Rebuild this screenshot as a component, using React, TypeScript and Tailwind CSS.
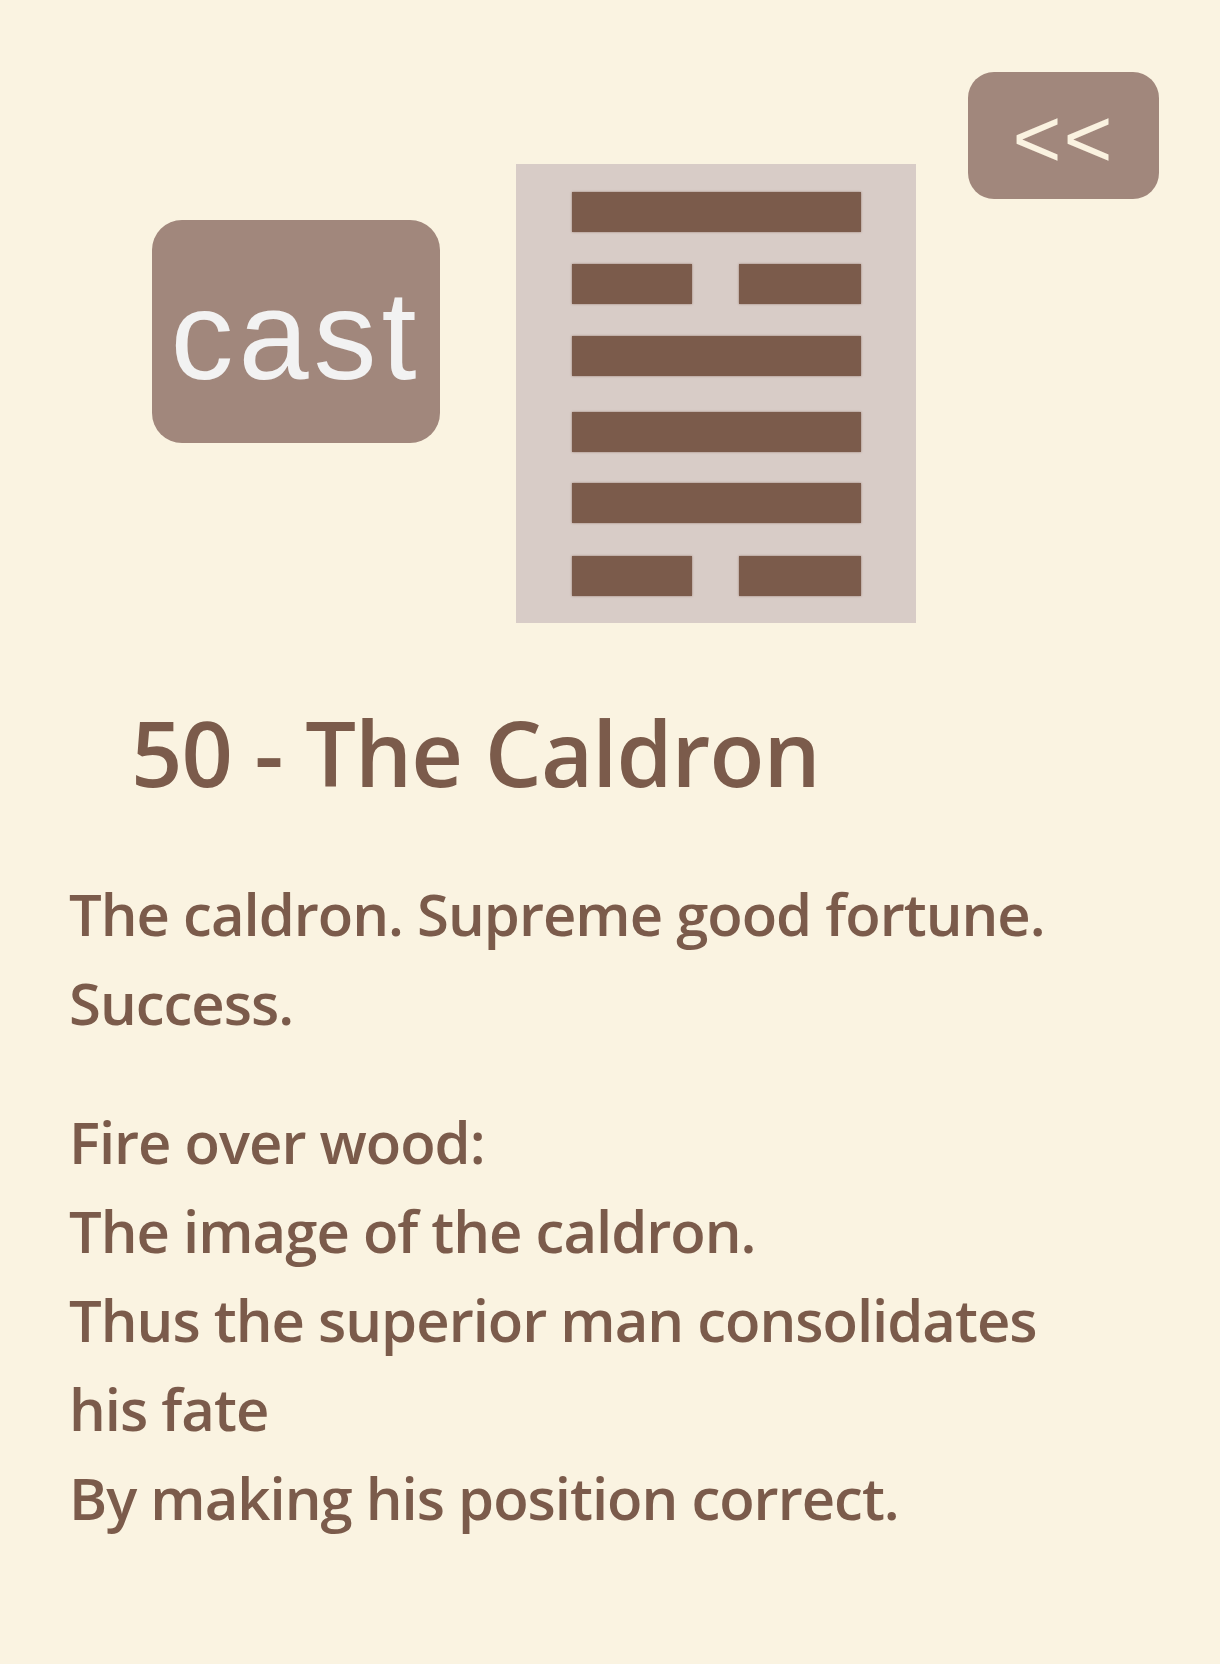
import React from "react";

const Solid = ({ mt }: { mt: string }) => (
  <div className={`${mt} h-[40px] w-[289px] bg-[#7b5b4b] shadow-[0_0_2px_rgba(123,91,75,0.7)]`} />
);

const Broken = ({ mt }: { mt: string }) => (
  <div className={`${mt} flex h-[40px] w-[289px] justify-between`}>
    <div className="h-full w-[120px] bg-[#7b5b4b] shadow-[0_0_2px_rgba(123,91,75,0.7)]" />
    <div className="h-full w-[122px] bg-[#7b5b4b] shadow-[0_0_2px_rgba(123,91,75,0.7)]" />
  </div>
);

export default function App() {
  const body = "font-['Open_Sans',sans-serif] font-semibold text-[58px] leading-[89px] tracking-[-1px] text-[#7b5b4b] whitespace-nowrap";
  return (
    <div className="min-h-[1664px] w-full bg-[#faf3e1]">
      <div className="flex items-start pl-[152px]">
        <button className="mt-[220px] flex h-[223px] w-[288px] items-center justify-center rounded-[30px] bg-[#a1877c] pt-[8px] font-['Liberation_Sans',Arial,sans-serif] text-[126px] tracking-[5px] text-[#f2f2f2]">
          cast
        </button>
        <div className="ml-[76px] mt-[164px] flex h-[459px] w-[400px] flex-col bg-[#d8ccc7] pl-[56px]">
          <Solid mt="mt-[28px]" />
          <Broken mt="mt-[32px]" />
          <Solid mt="mt-[32px]" />
          <Solid mt="mt-[36px]" />
          <Solid mt="mt-[31px]" />
          <Broken mt="mt-[33px]" />
        </div>
        <button className="ml-[52px] mt-[72px] flex h-[127px] w-[191px] items-center justify-center rounded-[26px] bg-[#a1877c] pt-[4px] font-['Liberation_Sans',Arial,sans-serif] text-[84px] leading-none tracking-[2px] text-[#faf2e0]">
          &lt;&lt;
        </button>
      </div>
      <h1 className="ml-[131px] mt-[84px] font-['Open_Sans',sans-serif] text-[90px] font-semibold leading-[90px] tracking-[-0.9px] text-[#7b5b4b] whitespace-nowrap">
        50 - The Caldron
      </h1>
      <div className="ml-[69px] mt-[72px]">
        <div className={body}>The caldron. Supreme good fortune.</div>
        <div className={body}>Success.</div>
      </div>
      <div className="ml-[69px] mt-[50px]">
        <div className={body}>Fire over wood:</div>
        <div className={body}>The image of the caldron.</div>
        <div className={body}>Thus the superior man consolidates</div>
        <div className={body}>his fate</div>
        <div className={body}>By making his position correct.</div>
      </div>
    </div>
  );
}
